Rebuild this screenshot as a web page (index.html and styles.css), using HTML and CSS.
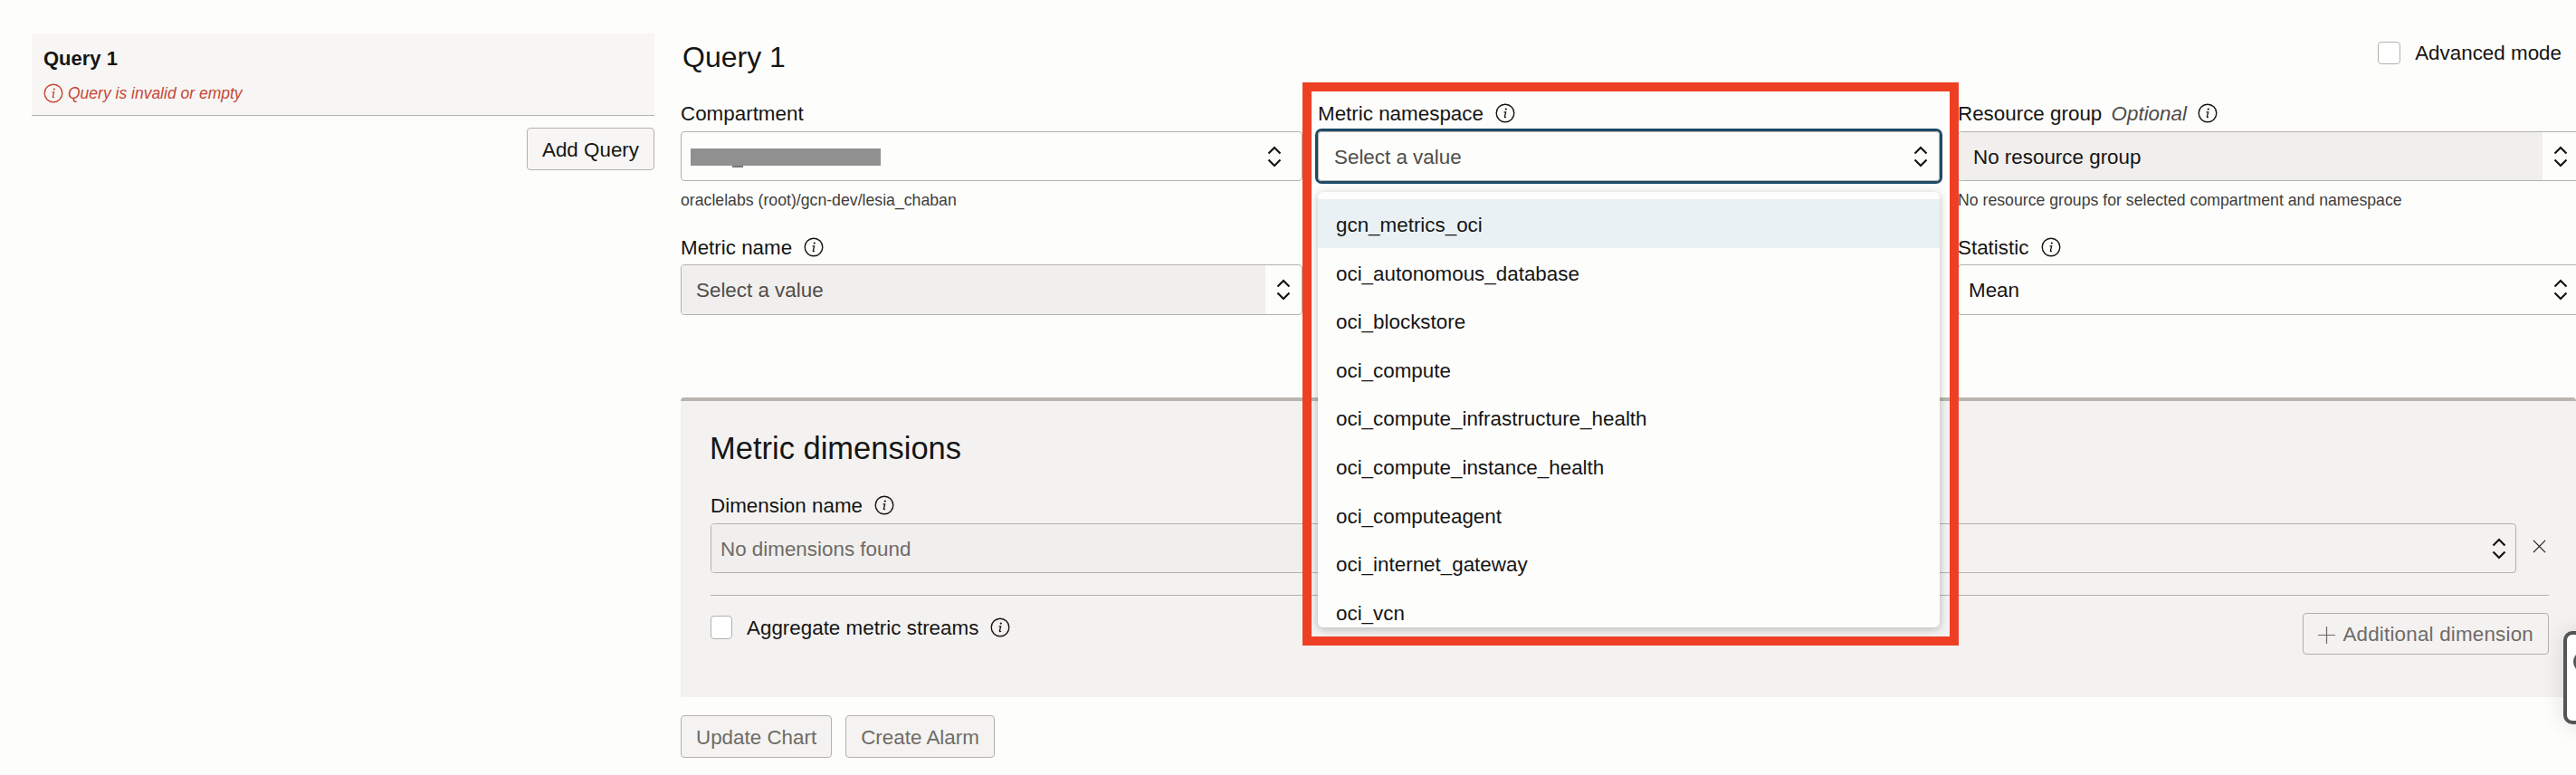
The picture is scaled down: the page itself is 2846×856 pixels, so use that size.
FILE: index.html
```html
<!DOCTYPE html>
<html>
<head>
    <title>Metrics Explorer</title>
    <link rel="stylesheet" href="styles.css">
</head>
<body>
    <!-- Shared icons -->
    <svg class="icon-defs">
        <symbol id="icon-info" viewBox="0 0 22 22">
            <circle cx="11" cy="11" r="9.8" fill="none" stroke="currentColor" stroke-width="1.4"/>
            <circle cx="11.8" cy="6.6" r="1.1" fill="currentColor"/>
            <path d="M9.6 9.8h2l-1.2 5.2c-.1.6.5.8 1.6.2" fill="none" stroke="currentColor" stroke-width="1.3"/>
        </symbol>
        <symbol id="icon-chevrons" viewBox="0 0 16 24">
            <path d="M1.5 8.5 8 2l6.5 6.5M1.5 15.5 8 22l6.5-6.5" fill="none" stroke="currentColor" stroke-width="2.2"/>
        </symbol>
    </svg>

    <div class="page">
        <div class="sidebar">
            <div class="query-card">
                <div class="query-card-title">Query 1</div>
                <div class="query-card-error">
                    <svg class="info"><use href="#icon-info"/></svg>
                    <span>Query is invalid or empty</span>
                </div>
            </div>
            <div class="add-query">
                <button class="btn">Add Query</button>
            </div>
        </div>

        <div class="main">
            <div class="main-head">
                <h1>Query 1</h1>
                <label class="check advanced">
                    <span class="box"></span>
                    <span>Advanced mode</span>
                </label>
            </div>

            <div class="fields">
                <div class="field">
                    <div class="field-label">Compartment</div>
                    <div class="select">
                        <div class="select-value"><span class="redacted"></span></div>
                        <div class="select-arrow select-arrow-inset"><svg class="chevrons"><use href="#icon-chevrons"/></svg></div>
                    </div>
                    <div class="field-help">oraclelabs (root)/gcn-dev/lesia_chaban</div>
                </div>

                <div class="field">
                    <div class="field-label">Metric namespace <svg class="info"><use href="#icon-info"/></svg></div>
                    <div class="select select-focus">
                        <div class="select-value placeholder select-value-open">Select a value</div>
                        <div class="select-arrow"><svg class="chevrons"><use href="#icon-chevrons"/></svg></div>
                    </div>
                    <ul class="dropdown">
                        <li class="active">gcn_metrics_oci</li>
                        <li>oci_autonomous_database</li>
                        <li>oci_blockstore</li>
                        <li>oci_compute</li>
                        <li>oci_compute_infrastructure_health</li>
                        <li>oci_compute_instance_health</li>
                        <li>oci_computeagent</li>
                        <li>oci_internet_gateway</li>
                        <li>oci_vcn</li>
                    </ul>
                </div>

                <div class="field">
                    <div class="field-label">Resource group <em>Optional</em> <svg class="info"><use href="#icon-info"/></svg></div>
                    <div class="select">
                        <div class="select-value disabled">No resource group</div>
                        <div class="select-arrow"><svg class="chevrons"><use href="#icon-chevrons"/></svg></div>
                    </div>
                    <div class="field-help">No resource groups for selected compartment and namespace</div>
                </div>

                <div class="field field-tall">
                    <div class="field-label">Metric name <svg class="info"><use href="#icon-info"/></svg></div>
                    <div class="select">
                        <div class="select-value disabled placeholder">Select a value</div>
                        <div class="select-arrow"><svg class="chevrons"><use href="#icon-chevrons"/></svg></div>
                    </div>
                </div>

                <div class="field"></div>

                <div class="field field-tall">
                    <div class="field-label">Statistic <svg class="info"><use href="#icon-info"/></svg></div>
                    <div class="select">
                        <div class="select-value select-value-tight">Mean</div>
                        <div class="select-arrow"><svg class="chevrons"><use href="#icon-chevrons"/></svg></div>
                    </div>
                </div>
            </div>

            <div class="dimensions">
                <h2>Metric dimensions</h2>
                <div class="field-label">Dimension name <svg class="info"><use href="#icon-info"/></svg></div>
                <div class="dimension-row">
                    <div class="select select-dimension">
                        <div class="select-value disabled muted">No dimensions found</div>
                        <div class="select-arrow"><svg class="chevrons"><use href="#icon-chevrons"/></svg></div>
                    </div>
                    <svg class="remove" viewBox="0 0 16 16"><path d="M1 1l14 14M15 1 1 15" fill="none" stroke="currentColor" stroke-width="1.2"/></svg>
                </div>
                <div class="dimension-divider"></div>
                <div class="dimension-foot">
                    <label class="check aggregate">
                        <span class="box"></span>
                        <span class="aggregate-text">Aggregate metric streams</span>
                        <svg class="info"><use href="#icon-info"/></svg>
                    </label>
                    <button class="btn btn-muted btn-add">
                        <svg class="plus" viewBox="0 0 20 20"><path d="M10 0v20M0 10h20" fill="none" stroke="currentColor" stroke-width="1.3"/></svg>
                        Additional dimension
                    </button>
                </div>
            </div>

            <div class="actions">
                <button class="btn btn-muted">Update Chart</button>
                <button class="btn btn-muted">Create Alarm</button>
            </div>
        </div>

        <!-- Red annotation around the namespace list -->
        <div class="highlight"></div>

        <!-- Floating help widget, cut off by the right edge -->
        <div class="help-widget"><span class="help-widget-dot"></span></div>
    </div>
</body>
</html>
```

FILE: styles.css
```css
/* Reset default margin and padding */
* {
    margin: 0;
    padding: 0;
    box-sizing: border-box;
}

body {
    background-color: #fdfdfc;
    color: #161513;
    font-family: "Liberation Sans", Arial, sans-serif;
    font-size: 22.4px;
}

.icon-defs {
    display: none;
}

.page {
    position: relative;
    display: flex;
    width: 2846px;
    height: 856px;
    overflow: hidden;
}

/* Left column with the query list */
.sidebar {
    flex: none;
    width: 688px;
    margin-left: 35px;
    padding-top: 37px;
}

.query-card {
    height: 91px;
    padding: 16px 13px 0;
    background-color: #f7f6f5;
    border-bottom: 1px solid #b5b1ac;
}

.query-card-title {
    font-size: 22px;
    font-weight: bold;
    line-height: 24px;
}

.query-card-error {
    display: flex;
    align-items: center;
    gap: 5px;
    margin-top: 14px;
    color: #c74634;
    font-size: 17.5px;
    font-style: italic;
    line-height: 24px;
}

.add-query {
    display: flex;
    justify-content: flex-end;
    margin-top: 13px;
}

/* Buttons */
.btn {
    height: 47px;
    padding: 2px 16px 0;
    background-color: #f7f6f5;
    border: 1px solid #b5b1ac;
    border-radius: 4px;
    color: #161513;
    font-family: inherit;
    font-size: 22.4px;
}

.btn-muted {
    background-color: #f4f3f1;
    color: #6f6b66;
}

.btn-add {
    display: flex;
    align-items: center;
    gap: 8px;
    height: 46px;
    background-color: transparent;
    letter-spacing: 0.2px;
}

.plus {
    width: 19px;
    height: 19px;
}

/* Main form */
.main {
    flex: none;
    width: 2094px;
    margin-left: 29px;
}

.main-head {
    display: flex;
    justify-content: space-between;
    height: 113px;
    padding-right: 16px;
}

h1 {
    margin-top: 44px;
    padding-left: 2px;
    font-size: 32px;
    font-weight: normal;
    line-height: 38px;
}

.check {
    display: flex;
    align-items: center;
    gap: 16px;
    line-height: 24px;
}

.advanced {
    align-self: flex-start;
    margin-top: 46px;
}

.box {
    flex: none;
    width: 25px;
    height: 25px;
    background-color: #fff;
    border: 1px solid #b5b1ac;
    border-radius: 4px;
}

.fields {
    display: grid;
    grid-template-columns: 704px 707px 687px;
    grid-template-rows: 120px 86px;
    row-gap: 28px;
}

.field {
    position: relative;
    width: 687px;
}

.field-label {
    display: flex;
    align-items: center;
    height: 24px;
    margin-bottom: 8px;
    padding-top: 2px;
    line-height: 24px;
    white-space: pre;
}

.field-tall .field-label {
    margin-bottom: 7px;
}

.field-tall .select {
    height: 56px;
}

.field-label em {
    margin-left: 4px;
    margin-right: 5px;
    color: #4f4c48;
}

.field-label .info {
    margin-top: -2px;
    margin-left: 7px;
}

.info {
    flex: none;
    width: 22px;
    height: 22px;
}

/* Select boxes */
.select {
    display: flex;
    height: 55px;
    overflow: hidden;
    border: 1px solid #b5b1ac;
    border-radius: 4px;
}

.select-focus {
    overflow: visible;
    box-shadow: 0 0 0 3px #1d4a66;
}

.select-value {
    display: flex;
    flex: 1;
    align-items: center;
    padding-top: 2px;
    padding-left: 16px;
}

.select-value-open {
    padding-left: 17px;
}

.select-value-tight {
    padding-left: 11px;
}

.select-value.disabled {
    background-color: #f0efee;
}

.placeholder {
    color: #4f4c48;
}

.muted {
    padding-left: 10px;
    color: #6f6b66;
}

.select-arrow {
    display: flex;
    flex: none;
    align-items: center;
    justify-content: center;
    width: 40px;
}

.select-arrow-inset {
    margin-right: 10px;
}

.chevrons {
    width: 16px;
    height: 24px;
}

.redacted {
    position: relative;
    display: block;
    width: 210px;
    height: 19px;
    margin-left: -6px;
    background-color: #909090;
}

.redacted::after {
    content: "";
    position: absolute;
    left: 46px;
    bottom: -2px;
    width: 12px;
    height: 2px;
    background-color: #777;
}

.field-help {
    margin-top: 9px;
    color: #3f3d3a;
    font-size: 17.7px;
    line-height: 24px;
}

/* Open list under the namespace select */
.dropdown {
    position: absolute;
    top: 99px;
    left: 0;
    z-index: 2;
    width: 687px;
    height: 481px;
    padding-top: 8px;
    overflow: hidden;
    list-style: none;
    background-color: #fdfdfc;
    border-radius: 6px;
    box-shadow: 0 2px 10px rgba(0, 0, 0, 0.25);
}

.dropdown li {
    height: 53.6px;
    padding-top: 2px;
    padding-left: 20px;
    line-height: 53.6px;
}

.dropdown li.active {
    background-color: #e9f1f5;
}

/* Metric dimensions panel */
.dimensions {
    height: 331px;
    margin-top: 92px;
    padding: 32px 30px 0 33px;
    background-color: #f3f2f1;
    border-top: 4px solid #b9b5ad;
    border-radius: 4px 4px 0 0;
}

h2 {
    margin-bottom: 31px;
    margin-left: -1px;
    font-size: 34.5px;
    font-weight: normal;
    line-height: 40px;
}

.dimension-row {
    display: flex;
    align-items: center;
    justify-content: space-between;
}

.select-dimension {
    width: 1995px;
}

.select-dimension .select-value {
    flex: none;
    width: 800px;
}

.select-dimension .select-arrow {
    margin-left: auto;
    width: 36px;
}

.remove {
    width: 15px;
    height: 15px;
    margin-right: 3px;
    margin-bottom: 5px;
}

.dimension-divider {
    height: 1px;
    margin-top: 24px;
    background-color: #b5b1ac;
}

.dimension-foot {
    display: flex;
    align-items: flex-start;
    justify-content: space-between;
    margin-top: 19px;
}

.aggregate {
    gap: 16px;
    margin-top: 3px;
}

.aggregate .box {
    width: 24px;
    height: 26px;
}

.aggregate .info {
    margin-left: -3px;
}

.aggregate-text {
    padding-top: 2px;
}

.actions {
    display: flex;
    gap: 15px;
    margin-top: 20px;
}

/* Annotation and floating widget */
.highlight {
    position: absolute;
    top: 91px;
    left: 1439px;
    z-index: 3;
    width: 725px;
    height: 622px;
    border: 10px solid #ee3f24;
}

.help-widget {
    position: absolute;
    top: 697px;
    left: 2832px;
    width: 40px;
    height: 103px;
    background-color: #fff;
    border: 4px solid #555;
    border-radius: 10px;
    box-shadow: 0 0 24px rgba(0, 0, 0, 0.12);
}

.help-widget-dot {
    display: block;
    width: 24px;
    height: 24px;
    margin: 18px 0 0 7px;
    background-color: #888;
    border: 3px solid #555;
    border-radius: 50%;
}
```
